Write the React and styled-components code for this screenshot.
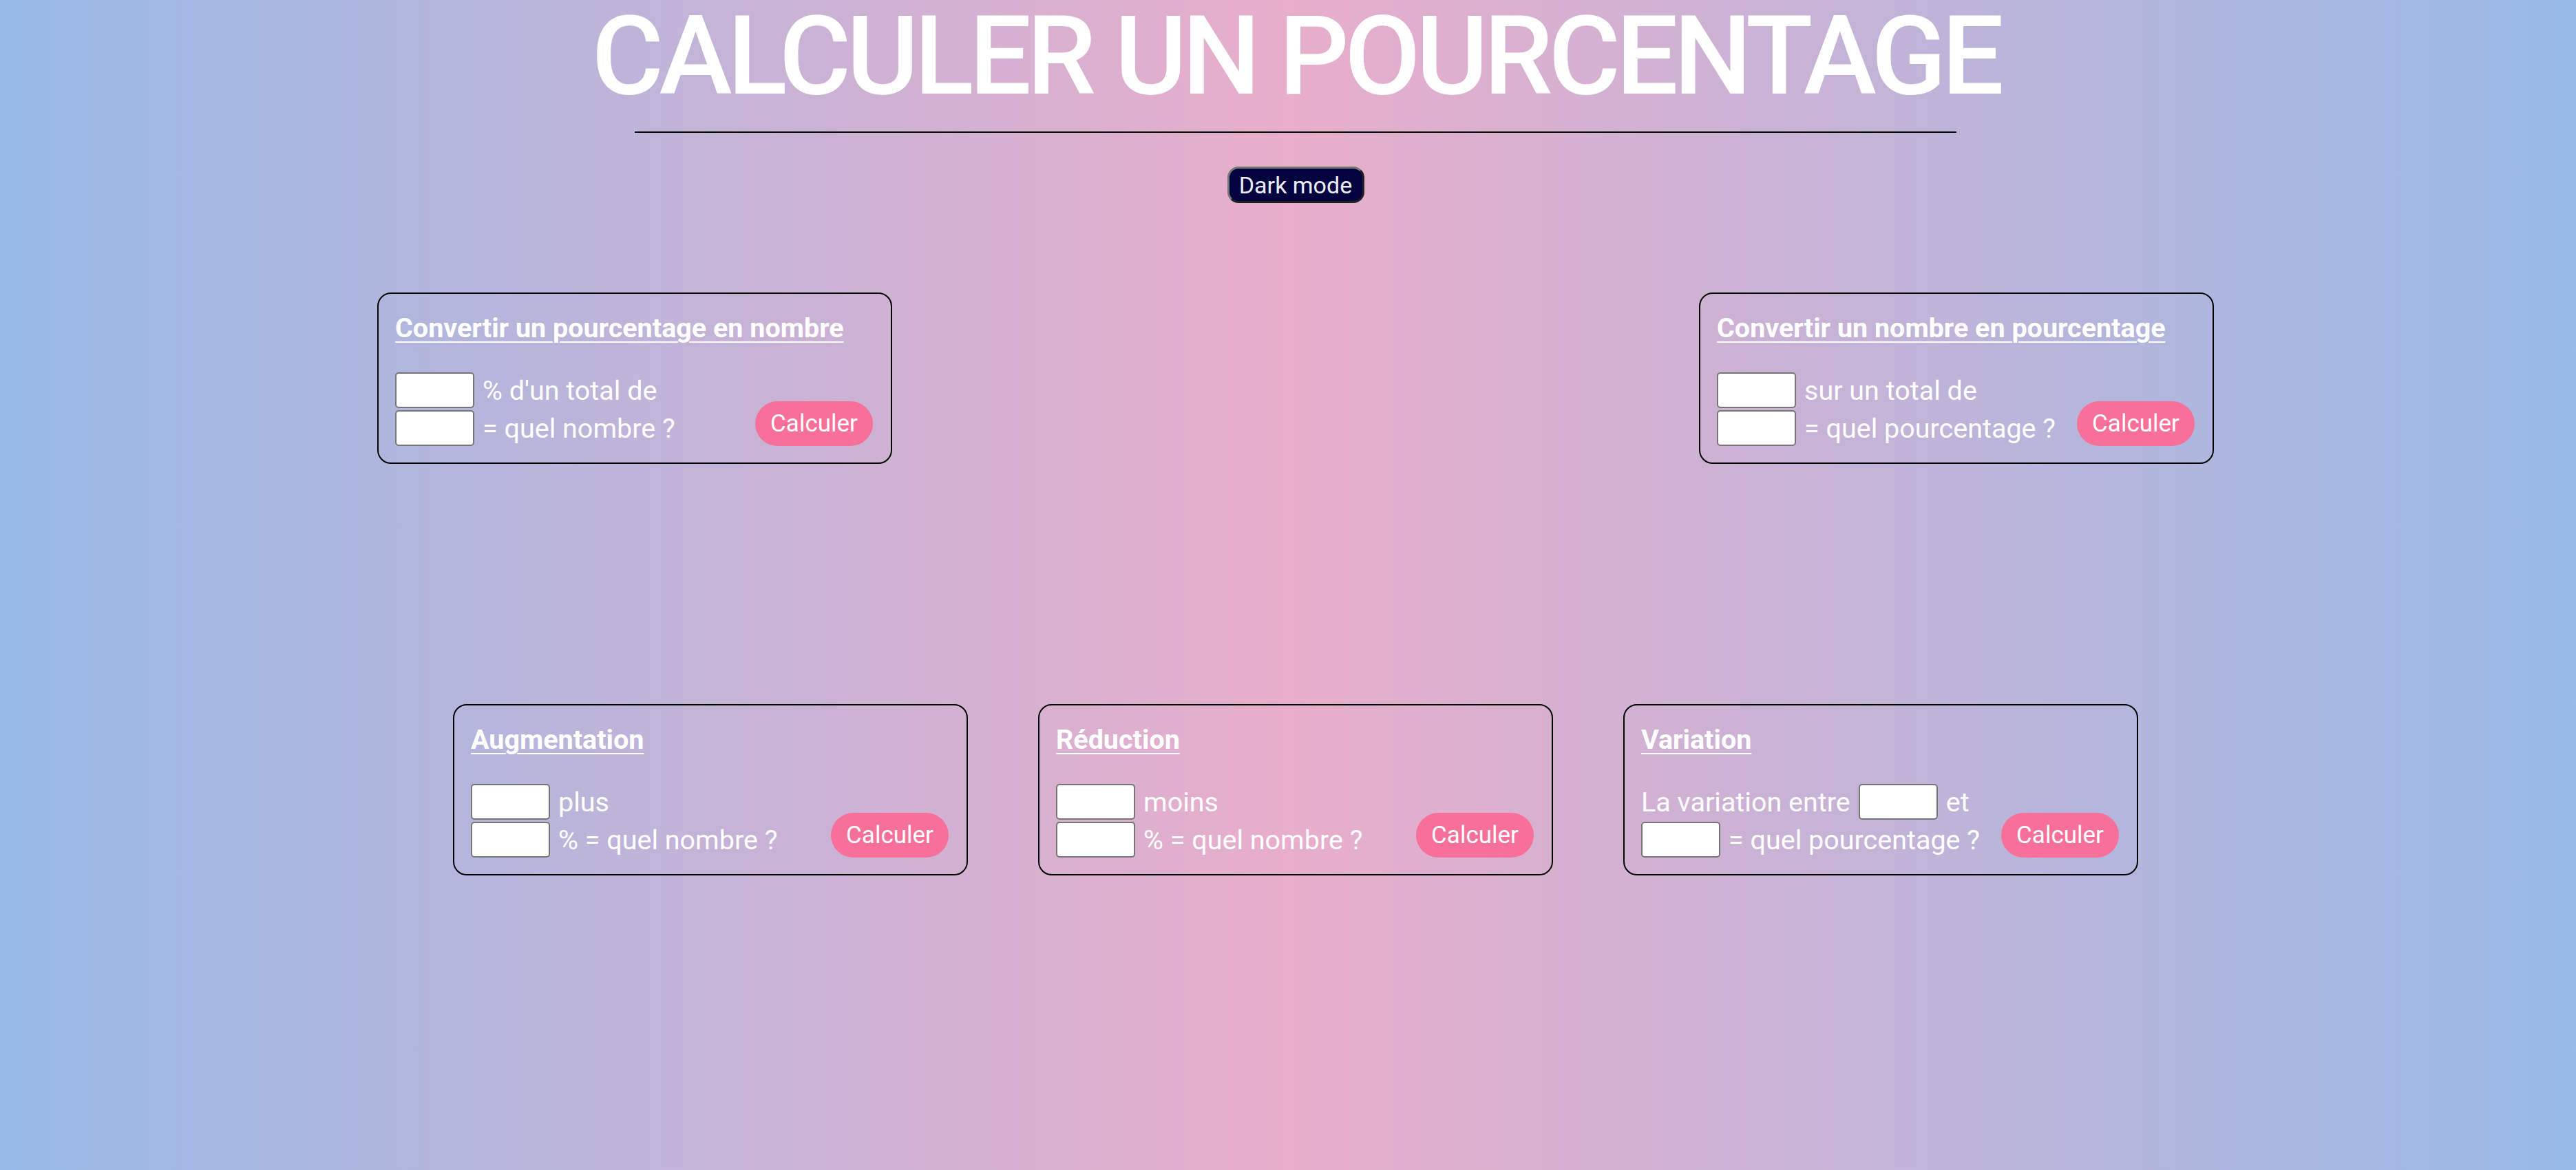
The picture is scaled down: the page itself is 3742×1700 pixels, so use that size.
import React from 'react';
import styled, { createGlobalStyle } from 'styled-components';

const GlobalStyle = createGlobalStyle`
  html, body {
    margin: 0;
    min-height: 100%;
  }
  body {
    font-family: Roboto, "Liberation Sans", sans-serif;
    background: linear-gradient(to right, #97bae6 0%, #e8aecb 50%, #97bae6 100%);
    min-height: 100vh;
  }
`;

function Card({ title, rows }) {
  return (
    <CardBox>
      <CardTitle>{title}</CardTitle>
      <CardBody>
        <Fields>
          {rows.map((row, i) => (
            <FieldRow key={i}>
              {row.map((part, j) =>
                part === null ? <NumInput key={j} type="text" /> : <Label key={j}>{part}</Label>
              )}
            </FieldRow>
          ))}
        </Fields>
        <CalcButton>Calculer</CalcButton>
      </CardBody>
    </CardBox>
  );
}

function App() {
  return (
    <>
      <GlobalStyle />
      <Page>
        <Title>CALCULER UN POURCENTAGE</Title>
        <Rule />
        <DarkButton>Dark mode</DarkButton>
        <TopRow>
          <Card
            title="Convertir un pourcentage en nombre"
            rows={[[null, "% d'un total de"], [null, '= quel nombre ?']]}
          />
          <Card
            title="Convertir un nombre en pourcentage"
            rows={[[null, 'sur un total de'], [null, '= quel pourcentage ?']]}
          />
        </TopRow>
        <BottomRow>
          <Card title="Augmentation" rows={[[null, 'plus'], [null, '% = quel nombre ?']]} />
          <Card title="Réduction" rows={[[null, 'moins'], [null, '% = quel nombre ?']]} />
          <Card
            title="Variation"
            rows={[['La variation entre', null, 'et'], [null, '= quel pourcentage ?']]}
          />
        </BottomRow>
      </Page>
    </>
  );
}

const Page = styled.div`
  min-height: 100vh;
  box-sizing: border-box;
  padding-left: 22px;
  display: flex;
  flex-direction: column;
  align-items: center;
`;

const Title = styled.h1`
  margin: 2px 0 0;
  font-size: 160px;
  line-height: 160px;
  font-weight: 500;
  letter-spacing: -6.5px;
  color: #ffffff;
  white-space: nowrap;
`;

const Rule = styled.div`
  width: 1920px;
  height: 2px;
  background: #000000;
  margin-top: 29px;
`;

const DarkButton = styled.button`
  margin-top: 49px;
  width: 199px;
  height: 53px;
  box-sizing: border-box;
  border: 3px outset #767676;
  border-radius: 16px;
  background: #03033f;
  color: #ececf8;
  font-family: Roboto, sans-serif;
  font-size: 34px;
  padding: 0;
`;

const TopRow = styled.div`
  margin-top: 130px;
  display: flex;
  gap: 1172px;
`;

const BottomRow = styled.div`
  margin-top: 349px;
  display: flex;
  gap: 102px;
`;

const CardBox = styled.div`
  width: 748px;
  height: 249px;
  box-sizing: border-box;
  border: 2px solid #000000;
  border-radius: 20px;
  padding: 26px 26px 24px 24px;
  display: flex;
  flex-direction: column;
`;

const CardTitle = styled.h3`
  margin: 0;
  font-size: 39.5px;
  line-height: 47px;
  font-weight: 700;
  color: #ffffff;
  text-decoration: underline;
  text-decoration-thickness: 2px;
  text-underline-offset: 6px;
`;

const CardBody = styled.div`
  margin-top: 41px;
  display: flex;
  justify-content: space-between;
  align-items: flex-end;
`;

const Fields = styled.div`
  display: flex;
  flex-direction: column;
  gap: 3px;
`;

const FieldRow = styled.div`
  display: flex;
  align-items: center;
  gap: 12px;
  height: 52px;
`;

const NumInput = styled.input`
  width: 115px;
  height: 52px;
  box-sizing: border-box;
  border: 2px solid #767676;
  border-radius: 5px;
  background: #ffffff;
  padding: 0;
`;

const Label = styled.span`
  font-size: 39.5px;
  color: #ffffff;
  white-space: nowrap;
`;

const CalcButton = styled.button`
  width: 171px;
  height: 65px;
  border: none;
  border-radius: 33px;
  background: #f7709a;
  color: #ffffff;
  font-family: Roboto, sans-serif;
  font-size: 35px;
  padding: 0;
  flex-shrink: 0;
`;

export default App;
